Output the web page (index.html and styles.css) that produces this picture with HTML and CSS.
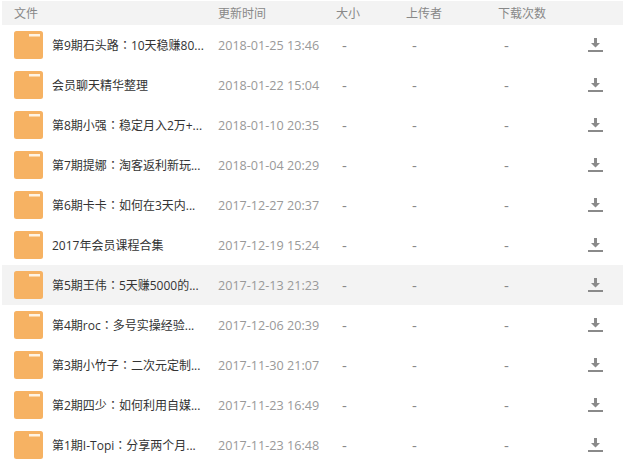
FILE: index.html
```html
<!DOCTYPE html>
<html lang="zh-CN">
<head>
    <meta charset="UTF-8">
    <title>文件</title>
    <link rel="stylesheet" href="styles.css">
</head>
<body>
    <svg class="defs" width="0" height="0">
        <symbol id="folder" viewBox="0 0 29 28">
            <rect width="29" height="28" rx="2.5" fill="#f6b263"/>
            <rect x="15" y="3" width="11" height="2.500" fill="#fff3e2"/>
        </symbol>
        <symbol id="down" viewBox="0 0 15 16">
            <path d="M6 1h3v5h3L7.500 10.500 3 6h3z" fill="#8a8a8a"/>
            <rect y="13" width="15" height="2" fill="#8a8a8a"/>
        </symbol>
    </svg>
    <div class="list-head">
        <div>文件</div>
        <div>更新时间</div>
        <div>大小</div>
        <div>上传者</div>
        <div>下载次数</div>
    </div>
    <div class="row">
        <svg class="folder"><use href="#folder"/></svg>
        <div class="name">第9期石头路<span class="colon" lang="zh-TW">：</span>10天稳赚80...</div>
        <div class="time">2018-01-25 13:46</div>
        <div class="dash">-</div><div class="dash">-</div><div class="dash">-</div>
        <svg class="down"><use href="#down"/></svg>
    </div>
    <div class="row">
        <svg class="folder"><use href="#folder"/></svg>
        <div class="name">会员聊天精华整理</div>
        <div class="time">2018-01-22 15:04</div>
        <div class="dash">-</div><div class="dash">-</div><div class="dash">-</div>
        <svg class="down"><use href="#down"/></svg>
    </div>
    <div class="row">
        <svg class="folder"><use href="#folder"/></svg>
        <div class="name">第8期小强<span class="colon" lang="zh-TW">：</span>稳定月入2万+...</div>
        <div class="time">2018-01-10 20:35</div>
        <div class="dash">-</div><div class="dash">-</div><div class="dash">-</div>
        <svg class="down"><use href="#down"/></svg>
    </div>
    <div class="row">
        <svg class="folder"><use href="#folder"/></svg>
        <div class="name">第7期提娜<span class="colon" lang="zh-TW">：</span>淘客返利新玩...</div>
        <div class="time">2018-01-04 20:29</div>
        <div class="dash">-</div><div class="dash">-</div><div class="dash">-</div>
        <svg class="down"><use href="#down"/></svg>
    </div>
    <div class="row">
        <svg class="folder"><use href="#folder"/></svg>
        <div class="name">第6期卡卡<span class="colon" lang="zh-TW">：</span>如何在3天内...</div>
        <div class="time">2017-12-27 20:37</div>
        <div class="dash">-</div><div class="dash">-</div><div class="dash">-</div>
        <svg class="down"><use href="#down"/></svg>
    </div>
    <div class="row">
        <svg class="folder"><use href="#folder"/></svg>
        <div class="name">2017年会员课程合集</div>
        <div class="time">2017-12-19 15:24</div>
        <div class="dash">-</div><div class="dash">-</div><div class="dash">-</div>
        <svg class="down"><use href="#down"/></svg>
    </div>
    <div class="row active">
        <svg class="folder"><use href="#folder"/></svg>
        <div class="name">第5期王伟<span class="colon" lang="zh-TW">：</span>5天赚5000的...</div>
        <div class="time">2017-12-13 21:23</div>
        <div class="dash">-</div><div class="dash">-</div><div class="dash">-</div>
        <svg class="down"><use href="#down"/></svg>
    </div>
    <div class="row">
        <svg class="folder"><use href="#folder"/></svg>
        <div class="name">第4期roc<span class="colon" lang="zh-TW">：</span>多号实操经验...</div>
        <div class="time">2017-12-06 20:39</div>
        <div class="dash">-</div><div class="dash">-</div><div class="dash">-</div>
        <svg class="down"><use href="#down"/></svg>
    </div>
    <div class="row">
        <svg class="folder"><use href="#folder"/></svg>
        <div class="name">第3期小竹子<span class="colon" lang="zh-TW">：</span>二次元定制...</div>
        <div class="time">2017-11-30 21:07</div>
        <div class="dash">-</div><div class="dash">-</div><div class="dash">-</div>
        <svg class="down"><use href="#down"/></svg>
    </div>
    <div class="row">
        <svg class="folder"><use href="#folder"/></svg>
        <div class="name">第2期四少<span class="colon" lang="zh-TW">：</span>如何利用自媒...</div>
        <div class="time">2017-11-23 16:49</div>
        <div class="dash">-</div><div class="dash">-</div><div class="dash">-</div>
        <svg class="down"><use href="#down"/></svg>
    </div>
    <div class="row">
        <svg class="folder"><use href="#folder"/></svg>
        <div class="name">第1期I-Topi<span class="colon" lang="zh-TW">：</span>分享两个月...</div>
        <div class="time">2017-11-23 16:48</div>
        <div class="dash">-</div><div class="dash">-</div><div class="dash">-</div>
        <svg class="down"><use href="#down"/></svg>
    </div>
</body>
</html>
```

FILE: styles.css
```css
html, body {
    height: 100%;
    overflow: hidden;
}
body {
    margin: 0;
    padding-top: 1px;
    box-sizing: border-box;
    background: white;
    font-family: 'Open Sans', 'Noto Sans CJK SC', sans-serif;
    font-size: 12px;
}
.defs {
    display: block;
    height: 0;
}
.list-head {
    display: grid;
    grid-template-columns: 204px 118px 70px 92px 1fr;
    align-items: center;
    height: 24px;
    margin-left: 2px;
    padding-left: 12px;
    background: #f3f3f3;
    color: #888;
}
.row {
    display: grid;
    grid-template-columns: 29px 175px 118px 70px 92px 90px 15px;
    align-items: center;
    height: 40px;
    margin-left: 2px;
    padding-left: 12px;
}
.row.active {
    background: #f3f3f3;
}
.folder {
    width: 29px;
    height: 28px;
}
.name {
    margin-left: 9px;
    color: #333;
    white-space: nowrap;
}
.colon {
    font-family: 'Noto Sans CJK TC', sans-serif;
}
.time {
    color: #999;
    font-size: 12.600px;
}
.dash {
    padding-left: 6px;
    color: #888;
    font-size: 15px;
    line-height: 16px;
}
.down {
    width: 15px;
    height: 16px;
}
```
